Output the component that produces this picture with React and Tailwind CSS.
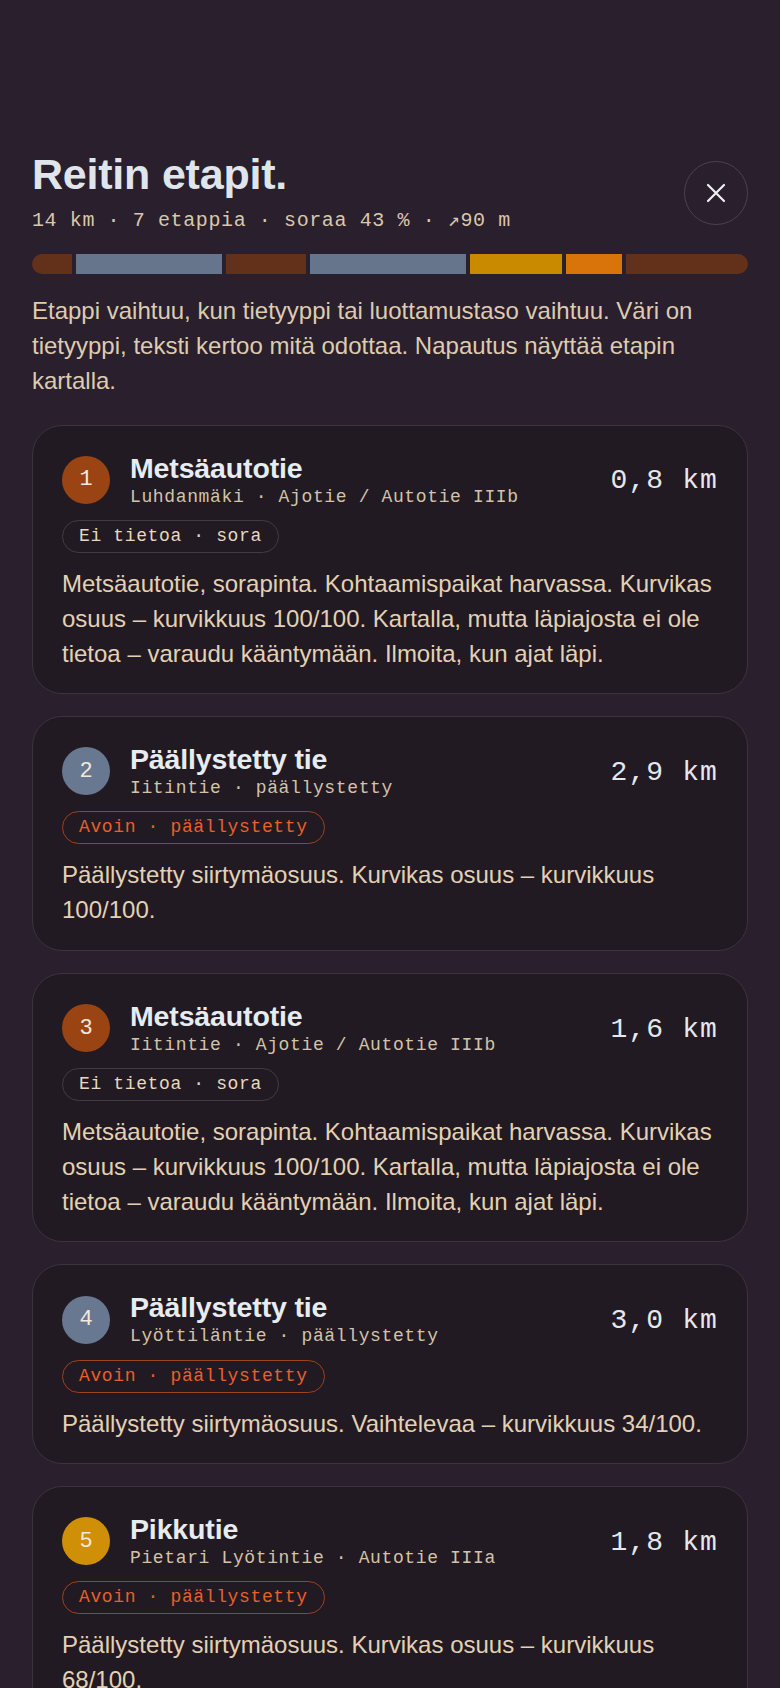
const sans = { fontFamily: '"Liberation Sans", Arial, sans-serif' };

const segments = [
  { w: 40, color: 'bg-[#63301a]' },
  { w: 146, color: 'bg-[#66758c]' },
  { w: 80, color: 'bg-[#63301a]' },
  { w: 156, color: 'bg-[#66758c]' },
  { w: 92, color: 'bg-[#c98a00]' },
  { w: 56, color: 'bg-[#d9740a]' },
  { w: 122, color: 'bg-[#63301a]' },
];

const gravelText =
  'Metsäautotie, sorapinta. Kohtaamispaikat harvassa. Kurvikas osuus – kurvikkuus 100/100. Kartalla, mutta läpiajosta ei ole tietoa – varaudu kääntymään. Ilmoita, kun ajat läpi.';

const stages = [
  {
    n: 1,
    dot: 'bg-[#9a4413]',
    title: 'Metsäautotie',
    meta: 'Luhdanmäki · Ajotie / Autotie IIIb',
    km: '0,8 km',
    tag: 'Ei tietoa · sora',
    warn: false,
    text: gravelText,
  },
  {
    n: 2,
    dot: 'bg-[#687890]',
    title: 'Päällystetty tie',
    meta: 'Iitintie · päällystetty',
    km: '2,9 km',
    tag: 'Avoin · päällystetty',
    warn: true,
    text: 'Päällystetty siirtymäosuus. Kurvikas osuus – kurvikkuus 100/100.',
  },
  {
    n: 3,
    dot: 'bg-[#9a4413]',
    title: 'Metsäautotie',
    meta: 'Iitintie · Ajotie / Autotie IIIb',
    km: '1,6 km',
    tag: 'Ei tietoa · sora',
    warn: false,
    text: gravelText,
  },
  {
    n: 4,
    dot: 'bg-[#687890]',
    title: 'Päällystetty tie',
    meta: 'Lyöttiläntie · päällystetty',
    km: '3,0 km',
    tag: 'Avoin · päällystetty',
    warn: true,
    text: 'Päällystetty siirtymäosuus. Vaihtelevaa – kurvikkuus 34/100.',
  },
  {
    n: 5,
    dot: 'bg-[#cf8f06]',
    title: 'Pikkutie',
    meta: 'Pietari Lyötintie · Autotie IIIa',
    km: '1,8 km',
    tag: 'Avoin · päällystetty',
    warn: true,
    text: 'Päällystetty siirtymäosuus. Kurvikas osuus – kurvikkuus 68/100.',
  },
];

function StageCard({ stage }) {
  return (
    <div className="rounded-[30px] border border-[#3b3340] bg-[#211a22] px-[29px] pt-[27px] pb-[22px]">
      <div className="flex items-center justify-between">
        <div className="flex items-center gap-5">
          <div
            className={`-mt-[3px] flex h-12 w-12 shrink-0 items-center justify-center rounded-full font-mono text-[22px] text-[#f3e9dc] ${stage.dot}`}
          >
            {stage.n}
          </div>
          <div>
            <div className="text-[28.5px] font-bold leading-[1.12] tracking-[-0.005em] text-[#e6ecf0]">{stage.title}</div>
            <div className="font-mono text-[18px] leading-[1.4] tracking-[0.035em] text-[#d3c3aa]">{stage.meta}</div>
          </div>
        </div>
        <div className="font-mono text-[28px] leading-none tracking-[0.04em] text-[#e4e8ec]">{stage.km}</div>
      </div>
      <div className="mt-[10px] flex">
        <span
          className={`flex h-[33px] items-center rounded-full border px-4 font-mono text-[18px] tracking-[0.035em] ${
            stage.warn ? 'border-[#9c421c] text-[#e8602a]' : 'border-[#433a47] text-[#e8d8bf]'
          }`}
        >
          {stage.tag}
        </span>
      </div>
      <p className="mt-[14px] text-[24px] leading-[1.45] text-[#e3d1b5]">{stage.text}</p>
    </div>
  );
}

export default function App() {
  return (
    <div className="h-[1688px] overflow-hidden bg-[#2a1f2c] px-8 pt-[151px]" style={sans}>
      <div className="flex items-center justify-between">
        <div>
          <h1 className="text-[43px] font-bold leading-[1.08] tracking-[-0.005em] text-[#dfe5ea]">Reitin etapit.</h1>
          <div className="mt-[10px] font-mono text-[20px] leading-[1.4] tracking-[0.03em] text-[#d9c7ab]">
            14 km · 7 etappia · soraa 43 % · ↗90 m
          </div>
        </div>
        <button
          type="button"
          className="flex h-16 w-16 items-center justify-center rounded-full border border-[#4a4150] text-[#eef0f2]"
        >
          <svg width="20" height="20" viewBox="0 0 20 20" fill="none" stroke="currentColor" strokeWidth="2.2" strokeLinecap="round">
            <path d="M2 2 18 18M18 2 2 18" />
          </svg>
        </button>
      </div>

      <div className="mt-[19px] flex h-5 gap-1 overflow-hidden rounded-full">
        {segments.map((s, i) => (
          <div key={i} className={`h-full ${s.color}`} style={{ flexGrow: s.w, flexBasis: 0 }} />
        ))}
      </div>

      <p className="mt-[20px] text-[24px] leading-[1.45] text-[#decbb0]">
        Etappi vaihtuu, kun tietyyppi tai luottamustaso vaihtuu. Väri on tietyyppi, teksti kertoo mitä odottaa. Napautus
        näyttää etapin kartalla.
      </p>

      <div className="mt-[26px] flex flex-col gap-[22px]">
        {stages.map((s) => (
          <StageCard key={s.n} stage={s} />
        ))}
      </div>
    </div>
  );
}

// mono font for the metrics
const style = document.createElement('style');
style.textContent = '.font-mono{font-family:"Liberation Mono","DejaVu Sans Mono",monospace;}';
document.head.appendChild(style);
